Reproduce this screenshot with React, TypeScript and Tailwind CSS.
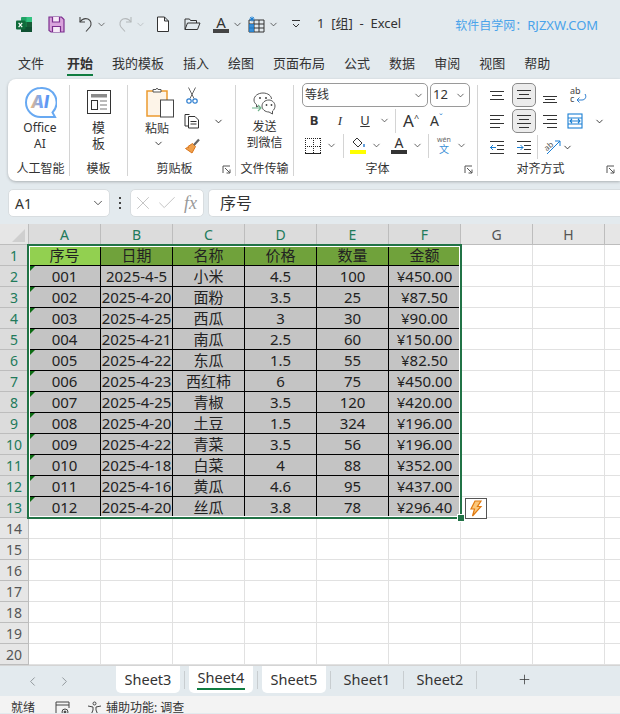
import { ReactNode } from 'react'
import { ChevronDown, ChevronLeft, ChevronRight, Plus, X, Check } from 'lucide-react'

const FONT = '[font-family:"Noto_Sans","Noto_Sans_CJK_SC",sans-serif]'

const tabs = ['文件', '开始', '我的模板', '插入', '绘图', '页面布局', '公式', '数据', '审阅', '视图', '帮助']

const headers = ['序号', '日期', '名称', '价格', '数量', '金额']
const rows = [
    ['001', '2025-4-5', '小米', '4.5', '100', '¥450.00'],
    ['002', '2025-4-20', '面粉', '3.5', '25', '¥87.50'],
    ['003', '2025-4-25', '西瓜', '3', '30', '¥90.00'],
    ['004', '2025-4-21', '南瓜', '2.5', '60', '¥150.00'],
    ['005', '2025-4-22', '东瓜', '1.5', '55', '¥82.50'],
    ['006', '2025-4-23', '西红柿', '6', '75', '¥450.00'],
    ['007', '2025-4-25', '青椒', '3.5', '120', '¥420.00'],
    ['008', '2025-4-20', '土豆', '1.5', '324', '¥196.00'],
    ['009', '2025-4-22', '青菜', '3.5', '56', '¥196.00'],
    ['010', '2025-4-18', '白菜', '4', '88', '¥352.00'],
    ['011', '2025-4-16', '黄瓜', '4.6', '95', '¥437.00'],
    ['012', '2025-4-20', '丝瓜', '3.8', '78', '¥296.40'],
]

const Chev = ({ className = 'text-[#333]' }: { className?: string }) => (
    <ChevronDown size={11} strokeWidth={1.6} className={`shrink-0 ${className}`} />
)

const Sep = () => <div className="h-[91px] w-px shrink-0 bg-[#d4d4d4]" />

const Launcher = () => (
    <svg width="10" height="10" viewBox="0 0 10 10" fill="none" stroke="#555" strokeWidth="1">
        <path d="M1 8V1h7" />
        <path d="M3 3l5 5M8 4.5V8H4.5" />
    </svg>
)

// three or more horizontal strokes used by all the alignment buttons
const Lines = ({ lines }: { lines: [number, number, number][] }) => (
    <svg width="16" height="16" viewBox="0 0 16 16" stroke="#333" strokeWidth="1">
        {lines.map(([x1, x2, y]) => (
            <path key={`${x1}-${y}`} d={`M${x1} ${y + 0.5}H${x2}`} />
        ))}
    </svg>
)

const AlignBtn = ({ on, children }: { on?: boolean; children: ReactNode }) => (
    <div
        className={`flex h-6 w-6 items-center justify-center rounded-[5px] ${
            on ? 'border border-[#8a8a8a] bg-[#ececec]' : ''
        }`}
    >
        {children}
    </div>
)

const Group = ({
    width,
    label,
    labelClass = '',
    launcher,
    children,
}: {
    width: number
    label: string
    labelClass?: string
    launcher?: boolean
    children: ReactNode
}) => (
    <div className="flex h-[92px] shrink-0 flex-col" style={{ width }}>
        <div className="min-h-0 flex-1">{children}</div>
        <div className={`relative flex h-[16px] items-center justify-center pt-[1px] text-[12px] leading-none text-[#333] ${labelClass}`}>
            {label}
            {launcher && (
                <div className="absolute right-[3px] top-[5px]">
                    <Launcher />
                </div>
            )}
        </div>
    </div>
)

const ExcelLogo = () => (
    <svg width="17" height="17" viewBox="0 0 17 17" className="shrink-0">
        <rect x="5" y="1" width="11" height="15" rx="1" fill="#21a366" />
        <rect x="10.5" y="1" width="5.5" height="5" fill="#33c481" />
        <rect x="5" y="6" width="5.5" height="5" fill="#107c41" />
        <rect x="10.5" y="6" width="5.5" height="5" fill="#185c37" />
        <rect x="5" y="11" width="11" height="5" fill="#0f5132" />
        <rect x="0" y="4.5" width="9.5" height="9" rx="1" fill="#0f6b3a" />
        <path d="M2.6 6.8l3.6 4.4M6.2 6.8l-3.6 4.4" stroke="#fff" strokeWidth="1.2" />
    </svg>
)

const TitleBar = () => (
    <div className="flex h-[47px] shrink-0 items-center whitespace-nowrap pl-[16px] pt-[1px] text-[#333]">
        <ExcelLogo />
        <svg className="ml-[15px] shrink-0" width="17" height="17" viewBox="0 0 17 17" fill="none" stroke="#7b2d8e" strokeWidth="1.2">
            <path d="M1 1h12.5L16 3.5V16H3l-2-1.5z" fill="#d9a3dc" />
            <path d="M4.5 1v5h7V1M4.5 16v-5.5h8V16" fill="#f6e9f7" />
        </svg>
        <svg className="ml-[13px] shrink-0" width="18" height="18" viewBox="0 0 18 18" fill="none" stroke="#444" strokeWidth="1.1">
            <path d="M2 2v5h5" />
            <path d="M2 7c2-3 5-4 8-3 3 1.2 4 5 2 8l-4 4.5" />
        </svg>
        <Chev className="text-[#444]" />
        <svg className="ml-[8px] shrink-0" width="18" height="18" viewBox="0 0 18 18" fill="none" stroke="#b4b8ba" strokeWidth="1.1">
            <path d="M16 2v5h-5" />
            <path d="M16 7c-2-3-5-4-8-3-3 1.2-4 5-2 8l4 4.5" />
        </svg>
        <Chev className="ml-[2px] text-[#b4b8ba]" />
        <svg className="ml-[10px] shrink-0" width="14" height="17" viewBox="0 0 14 17" fill="#fff" stroke="#333" strokeWidth="1">
            <path d="M1.5 1h7l4 4v10.500h-11zM8.500 1v4h4" />
        </svg>
        <svg className="ml-[14px] shrink-0" width="17" height="14" viewBox="0 0 17 14" fill="none" stroke="#333" strokeWidth="1">
            <path d="M1 12.500V2h4.500l1 1.500h6V6M1 12.500L3.500 6H16l-2.500 6.500z" />
        </svg>
        <div className="ml-[12px] flex h-[17px] w-[16px] shrink-0 flex-col items-center justify-between">
            <span className="text-[15px] leading-[13px]">A</span>
            <div className="h-[4px] w-full bg-[#444]" />
        </div>
        <Chev className="ml-[3px]" />
        <svg className="ml-[5px] shrink-0" width="17" height="17" viewBox="0 0 17 17" fill="none" strokeWidth="1">
            <path d="M1 4h15v12H1zM6 4v12M11 4v12M1 8h15M1 12h15" stroke="#333" />
            <rect x="1" y="8" width="5" height="8" fill="#1a7fd4" opacity=".85" />
            <path d="M4 0.500v5M1.500 3h5M2.200 1.200l3.600 3.600M5.800 1.200L2.200 4.800" stroke="#1a7fd4" />
        </svg>
        <Chev className="ml-[3px]" />
        <svg className="ml-[11px] shrink-0" width="12" height="12" viewBox="0 0 12 12" fill="none" stroke="#333" strokeWidth="1">
            <path d="M2 2.500h8M3 6l3 3 3-3" />
        </svg>
        <span className="ml-[15px] whitespace-pre text-[13px]">1  [组]  -  Excel</span>
        <span className="ml-[54px] pt-[2px] text-[13px] leading-none text-[#4aa3ea]">
            <span className="text-[12px]">软件自学网：</span>RJZXW.COM
        </span>
    </div>
)

const TabBar = () => (
    <div className="flex h-[32px] shrink-0 gap-[19px] pl-[18px] text-[13px] text-[#333]">
        {tabs.map((t) => (
            <div key={t} className={`relative flex h-[32px] items-center pt-[1px] ${t === '开始' ? 'ml-[4px]' : ''}`}>
                <span className={t === '开始' ? 'font-bold' : ''}>{t}</span>
                {t === '开始' && <div className="absolute bottom-[3px] left-0 right-0 h-[2px] bg-[#107c41]" />}
            </div>
        ))}
    </div>
)

const AiGroup = () => (
    <div className="flex flex-col items-center pl-[2px] pt-[2px]">
        <svg width="33" height="33" viewBox="0 0 33 33">
            <defs>
                <linearGradient id="ai" x1="0" y1="0" x2="1" y2="0">
                    <stop offset="0" stopColor="#f5b87a" />
                    <stop offset="0.5" stopColor="#7aa6f5" />
                    <stop offset="1" stopColor="#4f8ef0" />
                </linearGradient>
            </defs>
            <path d="M16.500 2a14.500 14.500 0 1 0 0 29h14.500l-2.500-4.500A14.500 14.500 0 0 0 16.500 2z" fill="#fff" stroke="#68a9f2" strokeWidth="2" />
            <text x="16" y="22" textAnchor="middle" fontSize="17" fontWeight="800" fontStyle="italic" fontFamily="Inter, sans-serif" fill="url(#ai)">
                AI
            </text>
        </svg>
        <div className="mt-[1px] text-center text-[12px] leading-[16px] text-[#333]">
            Office
            <br />
            AI
        </div>
    </div>
)

const TemplateGroup = () => (
    <div className="flex flex-col items-center pt-[6px]">
        <svg width="24" height="24" viewBox="0 0 24 24" fill="none" stroke="#333" strokeWidth="1">
            <rect x="0.500" y="0.500" width="23" height="23" />
            <rect x="4" y="4" width="16" height="3.500" fill="#8a8a8a" stroke="none" />
            <rect x="4.500" y="10.500" width="6" height="9" />
            <path d="M13 11h7M13 15h7M13 19h7" stroke="#777" strokeWidth="1.2" />
        </svg>
        <div className="mt-[5px] text-center text-[13px] leading-[16px] text-[#333]">
            模
            <br />
            板
        </div>
    </div>
)

const ClipGroup = () => (
    <div className="flex pl-[17px] pt-[3px]">
        <div className="flex w-[30px] flex-col items-center">
            <svg width="28" height="31" viewBox="0 0 28 31" fill="none">
                <rect x="1" y="4" width="20" height="25" fill="#fdf4e8" stroke="#ec9a2f" strokeWidth="1.5" />
                <path d="M7 5V2.500h3l1-1.500 1 1.500h3V5z" fill="#fff" stroke="#555" />
                <rect x="14.500" y="13" width="13" height="17" fill="#fff" stroke="#444" />
            </svg>
            <span className="mr-[6px] mt-[3px] whitespace-nowrap text-[12px] leading-[15px] text-[#333]">粘贴</span>
            <Chev className="mr-[4px] mt-[2px]" />
        </div>
        <div className="ml-[9px] flex flex-col items-start gap-[9px]">
            <svg className="ml-[2px]" width="12" height="17" viewBox="0 0 12 17" fill="none">
                <path d="M2.500 0.500l5.500 11M9.500 0.500l-5.500 11" stroke="#666" />
                <circle cx="3" cy="14" r="2.200" stroke="#2f7fd0" strokeWidth="1.200" />
                <circle cx="9" cy="14" r="2.200" stroke="#2f7fd0" strokeWidth="1.200" />
            </svg>
            <div className="flex items-center">
                <svg width="16" height="16" viewBox="0 0 16 16" fill="#fff" stroke="#333" strokeWidth="1">
                    <path d="M5.500 1.500H1V13h3.500" fill="none" />
                    <path d="M4.500 3.500h6.500l3.500 3.500v8h-10zM6.500 8.500h6M6.500 11h6" />
                </svg>
                <Chev className="ml-[13px]" />
            </div>
            <svg width="17" height="17" viewBox="0 0 17 17" fill="none">
                <path d="M8.500 5.500l3 3-3.500 6.500-6.500-4.500 2-1 1 .5-.5-1.500z" fill="#f0a04b" stroke="#d9741a" />
                <path d="M10 7l5-5.500" stroke="#666" strokeWidth="2.200" />
            </svg>
        </div>
    </div>
)

const WechatGroup = () => (
    <div className="flex flex-col items-center pt-[6px]">
        <svg width="27" height="27" viewBox="0 0 27 27" fill="none" stroke="#444" strokeWidth="0.9">
            <path d="M12 3c-5 0-9 3-9 7 0 2 1 3.500 2.500 4.500V17l2.500-1.500" fill="#fff" />
            <path d="M12 3c5 0 8.500 3 8.500 6" />
            <path d="M18 10c-4 0-7 2.700-7 6s3 6 7 6l3.500 2v-3c1.500-1 2.500-3 2.500-5 0-3.300-3-6-6-6z" fill="#fff" />
            <circle cx="9" cy="8" r="1" fill="#444" stroke="none" />
            <circle cx="15" cy="8" r="1" fill="#444" stroke="none" />
            <circle cx="15.500" cy="15" r="0.900" fill="#444" stroke="none" />
            <circle cx="20.500" cy="15" r="0.900" fill="#444" stroke="none" />
            <path d="M1 18h9M7 15l3 3-3 3" stroke="#6fb48b" strokeWidth="1.200" />
        </svg>
        <div className="mt-[2px] text-center text-[12px] leading-[16px] text-[#333]">
            发送
            <br />
            到微信
        </div>
    </div>
)

const SelectBox = ({ width, text, className }: { width: number; text: string; className?: string }) => (
    <div
        className={`flex h-[24px] items-center justify-between rounded-[5px] border border-[#9a9a9a] bg-white pl-[2px] pr-[3px] text-[#333] ${className ?? ''}`}
        style={{ width }}
    >
        <span>{text}</span>
        <Chev />
    </div>
)

const FontGroup = () => (
    <div className="-mt-[1px] flex flex-col pl-[8px] text-[#333]">
        <div className="flex gap-[2px]">
            <SelectBox width={126} text="等线" className="text-[12px]" />
            <SelectBox width={40} text="12" className="text-[13px]" />
        </div>
        <div className="mt-[1px] flex h-[25px] items-center">
            <span className="ml-[6px] w-[12px] text-center text-[13px] font-bold leading-none">B</span>
            <span className="ml-[14px] w-[12px] text-center text-[13px] italic leading-none [font-family:'Liberation_Serif',serif]">I</span>
            <span className="ml-[13px] w-[12px] text-center text-[13px] leading-[13px] underline">U</span>
            <Chev className="ml-[8px]" />
            <div className="ml-[5px] h-[24px] w-px bg-[#d4d4d4]" />
            <span className="ml-[7px] text-[17px] leading-none">A</span>
            <span className="mb-[6px] text-[9px] leading-none">^</span>
            <span className="ml-[11px] text-[14px] leading-none">A</span>
            <span className="mb-[6px] text-[9px] leading-none text-[#2f7fd0]">ˇ</span>
        </div>
        <div className="flex h-[25px] items-center">
            <svg className="ml-[3px] shrink-0" width="16" height="16" viewBox="0 0 16 16" fill="none" stroke="#222" strokeWidth="1">
                <path d="M0 .5h16M0 8.500h16M.5 0v16M8.500 0v16M15.500 0v16" strokeDasharray="1 1" />
                <path d="M0 15.500h16" />
            </svg>
            <Chev className="ml-[5px]" />
            <div className="ml-[6px] h-[24px] w-px shrink-0 bg-[#d4d4d4]" />
            <div className="ml-[6px] flex w-[16px] shrink-0 flex-col items-center">
                <svg width="15" height="12" viewBox="0 0 15 12" fill="none" stroke="#333">
                    <path d="M6 1l5 5-4 4-5-5z" />
                    <path d="M13 7v3" stroke="#2f7fd0" strokeWidth="1.500" />
                </svg>
                <div className="mt-[1px] h-[4px] w-full bg-[#ffff00]" />
            </div>
            <Chev className="ml-[5px]" />
            <div className="ml-[9px] flex w-[16px] shrink-0 flex-col items-center">
                <span className="text-[14px] leading-[12px]">A</span>
                <div className="mt-[1px] h-[4px] w-full bg-[#333]" />
            </div>
            <Chev className="ml-[5px]" />
            <div className="ml-[5px] h-[24px] w-px shrink-0 bg-[#d4d4d4]" />
            <div className="ml-[6px] flex w-[18px] shrink-0 flex-col items-center">
                <span className="text-[7px] leading-[8px] text-[#666]">wén</span>
                <span className="text-[10px] leading-[11px] text-[#3a8fd6]">文</span>
            </div>
            <Chev className="ml-[3px]" />
        </div>
    </div>
)

const AlignGroup = () => (
    <div className="-mt-[1px] flex flex-col pl-[8px]">
        <div className="flex h-[26px] items-start">
            <AlignBtn>
                <Lines lines={[[0, 14, 4], [2, 12, 8], [0, 14, 12]]} />
            </AlignBtn>
            <div className="ml-[2px]">
                <AlignBtn on>
                    <Lines lines={[[1, 15, 3], [3, 13, 7], [1, 15, 11]]} />
                </AlignBtn>
            </div>
            <div className="ml-[2px]">
                <AlignBtn>
                    <Lines lines={[[1, 15, 9], [3, 13, 12], [1, 15, 15]]} />
                </AlignBtn>
            </div>
            <svg className="ml-[6px] overflow-visible" width="20" height="22" viewBox="0 0 20 22" fill="none" stroke="#2f7fd0" strokeWidth="1">
                <text x="2" y="11" fontSize="9" fill="#444" stroke="none" fontFamily="Noto Sans, sans-serif">ab</text>
                <text x="2" y="19" fontSize="9" fill="#444" stroke="none" fontFamily="Noto Sans, sans-serif">c</text>
                <path d="M17 11c2 3 0 6-3 6H9M11.500 14.500L9 17l2.500 2.500" />
            </svg>
        </div>
        <div className="flex h-[26px] items-start">
            <AlignBtn>
                <Lines lines={[[0, 14, 2], [0, 10, 6], [0, 14, 10], [0, 10, 14]]} />
            </AlignBtn>
            <div className="ml-[2px]">
                <AlignBtn on>
                    <Lines lines={[[1, 15, 2], [3, 13, 6], [1, 15, 10], [3, 13, 14]]} />
                </AlignBtn>
            </div>
            <div className="ml-[2px]">
                <AlignBtn>
                    <Lines lines={[[1, 15, 2], [5, 15, 6], [1, 15, 10], [5, 15, 14]]} />
                </AlignBtn>
            </div>
            <svg className="ml-[5px] mt-[4px] shrink-0" width="16" height="16" viewBox="0 0 16 16" fill="none" stroke="#1a7fd4" strokeWidth="1.100">
                <rect x="1" y="1" width="14" height="14" />
                <path d="M1 5h14M1 11h14M3 8h10M5 6l-2 2 2 2M11 6l2 2-2 2" />
            </svg>
            <Chev className="ml-[11px] mt-[7px]" />
        </div>
        <div className="flex h-[26px] items-start">
            <AlignBtn>
                <svg width="16" height="16" viewBox="0 0 16 16" fill="none" stroke="#333">
                    <path d="M0 2.500h14M7 6.500h7M7 10.500h7M0 14.500h14" />
                    <path d="M6 8.500H0M3 6L.5 8.500 3 11" stroke="#1a7fd4" />
                </svg>
            </AlignBtn>
            <div className="ml-[2px]">
                <AlignBtn>
                    <svg width="16" height="16" viewBox="0 0 16 16" fill="none" stroke="#333">
                        <path d="M1 2.500h14M8 6.500h7M8 10.500h7M1 14.500h14" />
                        <path d="M1 8.500h6M4.500 6L7 8.500 4.500 11" stroke="#1a7fd4" />
                    </svg>
                </AlignBtn>
            </div>
            <div className="ml-[1px] h-[24px] w-px bg-[#d4d4d4]" />
            <svg className="ml-[6px] mt-[3px] overflow-visible" width="18" height="18" viewBox="0 0 18 18" fill="none" stroke="#1a7fd4">
                <text x="0" y="10" fontSize="8" fill="#555" stroke="none" transform="rotate(-40 6 8)" fontFamily="Noto Sans, sans-serif">ab</text>
                <path d="M3 16L16 3M11 3h5v5" />
            </svg>
            <Chev className="mt-[7px]" />
        </div>
    </div>
)

const Ribbon = () => (
    <div className="ml-[8px] flex h-[102px] shrink-0 items-center rounded-l-[8px] bg-white pl-[1px] shadow-[0_1px_3px_rgba(0,0,0,0.25)]">
        <Group width={60} label="人工智能" labelClass="pl-[3px]">
            <AiGroup />
        </Group>
        <Sep />
        <Group width={57} label="模板">
            <TemplateGroup />
        </Group>
        <Sep />
        <Group width={107} label="剪贴板" labelClass="pr-[14px]" launcher>
            <ClipGroup />
        </Group>
        <Sep />
        <Group width={57} label="文件传输">
            <WechatGroup />
        </Group>
        <Sep />
        <Group width={183} label="字体" labelClass="pr-[16px]" launcher>
            <FontGroup />
        </Group>
        <Sep />
        <Group width={141} label="对齐方式" labelClass="pr-[16px]" launcher>
            <AlignGroup />
        </Group>
    </div>
)

const FormulaBar = () => (
    <div className="mt-[8px] flex h-[28px] shrink-0 items-center pl-[8px] text-[#333]">
        <div className="flex h-[28px] w-[102px] items-center justify-between rounded-[5px] border border-[#d8dde0] bg-white pl-[6px] pr-[4px] text-[14px]">
            A1
            <ChevronDown size={14} strokeWidth={1.4} />
        </div>
        <div className="ml-[9px] flex h-[12px] w-[3px] flex-col justify-between">
            <div className="h-[2px] w-[2px] bg-[#444]" />
            <div className="h-[2px] w-[2px] bg-[#444]" />
            <div className="h-[2px] w-[2px] bg-[#444]" />
        </div>
        <div className="ml-[8px] flex h-[28px] w-[74px] items-center rounded-[5px] border border-[#d8dde0] bg-white pl-[1px] text-[#b9b9b9]">
            <X size={22} strokeWidth={0.9} />
            <Check size={22} strokeWidth={0.9} className="ml-[2px]" />
            <span className="ml-[6px] text-[18px] italic leading-none text-[#999] [font-family:'Liberation_Serif',serif]">fx</span>
        </div>
        <div className="ml-[4px] flex h-[28px] min-w-0 flex-1 items-center rounded-l-[5px] border border-r-0 border-[#d8dde0] bg-white pl-[11px] text-[16px]">
            序号
        </div>
    </div>
)

const colLetters = ['A', 'B', 'C', 'D', 'E', 'F', 'G', 'H']
const cellClass = 'flex items-center justify-center border-r border-b'

const Sheet = () => (
    <div className="relative mt-[7px] shrink-0">
        <div className="grid grid-cols-[29px_repeat(8,72px)_15px] auto-rows-[21px] bg-white">
            <div className="relative border-r border-b border-[#bdbdbd] bg-[#e6e6e6]">
                <div className="absolute bottom-[2px] right-[3px] h-0 w-0 border-b-[13px] border-l-[13px] border-b-[#cfcfcf] border-l-transparent" />
            </div>
            {colLetters.map((c, i) => (
                <div
                    key={c}
                    className={`${cellClass} border-[#bdbdbd] text-[14px] ${
                        i < 6 ? 'bg-[#dcdcdc] text-[#217a5a]' : 'bg-[#e6e6e6] text-[#555]'
                    }`}
                >
                    {c}
                </div>
            ))}
            <div className="border-b border-[#bdbdbd] bg-[#e6e6e6]" />
            {Array.from({ length: 20 }, (_, r) => (
                <Row key={r} r={r} />
            ))}
        </div>
        {/* selection frame and quick analysis sit over the cells */}
        <div className="pointer-events-none absolute left-[27px] top-[20px] h-[275px] w-[435px] border-2 border-[#217346] outline outline-1 -outline-offset-3 outline-white" />
        <div className="absolute left-[458px] top-[291px] h-[6px] w-[6px] bg-[#217346] outline outline-1 outline-white" />
        <div className="absolute left-[465px] top-[274px] flex h-[21px] w-[22px] items-center justify-center border border-[#555] bg-white">
            <svg width="14" height="17" viewBox="0 0 14 17" fill="#fbc77a" stroke="#e07a10" strokeWidth="1.200">
                <path d="M6 1h6L8.500 6.500H12L3.500 16l2-7H2z" />
            </svg>
        </div>
    </div>
)

const Row = ({ r }: { r: number }) => {
    const inData = r < 13
    const isHeader = r === 0
    const data = isHeader ? headers : rows[r - 1]
    return (
        <>
            <div
                className={`${cellClass} border-[#bdbdbd] text-[14px] ${
                    inData ? 'bg-[#dcdcdc] text-[#217a5a]' : 'bg-[#e6e6e6] text-[#555]'
                }`}
            >
                {r + 1}
            </div>
            {colLetters.map((c, i) => {
                if (inData && i < 6) {
                    const bg = isHeader ? (i === 0 ? 'bg-[#92d050]' : 'bg-[#70a23b]') : 'bg-[#c4c4c4]'
                    return (
                        <div
                            key={c}
                            className={`relative whitespace-nowrap border-black pt-[1px] text-[15px] leading-none text-[#222] ${cellClass} ${bg}`}
                        >
                            {data[i]}
                            {!isHeader && i === 0 && (
                                <div className="absolute left-0 top-0 h-0 w-0 border-t-[6px] border-r-[6px] border-t-[#0b6b12] border-r-transparent" />
                            )}
                        </div>
                    )
                }
                return <div key={c} className="border-r border-b border-[#e1e1e1]" />
            })}
            <div className="border-b border-[#e1e1e1]" />
        </>
    )
}

const SheetTabs = () => (
    <div className="flex h-[31px] shrink-0 border-t border-[#d4d4d4] bg-[#e3eaee] text-[14.5px] text-[#333]">
        <div className="flex w-[116px] items-center pl-[25px] text-[#7f868a]">
            <ChevronLeft size={15} strokeWidth={1.3} />
            <ChevronRight size={15} strokeWidth={1.3} className="ml-[17px]" />
        </div>
        <div className="flex h-[27px] w-[64px] items-center justify-center rounded-b-[5px] bg-white">Sheet3</div>
        <div className="mx-[4px] mt-[5px] h-[18px] w-px bg-[#c8cdd0]" />
        <div className="relative flex h-[27px] w-[64px] items-center justify-center rounded-b-[5px] bg-white pb-[3px]">
            Sheet4
            <div className="absolute bottom-[3px] left-[8px] right-[8px] h-[2px] bg-[#107c41]" />
        </div>
        <div className="mx-[4px] mt-[5px] h-[18px] w-px bg-[#c8cdd0]" />
        <div className="flex h-[27px] w-[64px] items-center justify-center rounded-b-[5px] bg-white">Sheet5</div>
        <div className="ml-[4px] mt-[5px] h-[18px] w-px bg-[#c8cdd0]" />
        <div className="flex h-[27px] w-[72px] items-center justify-center">Sheet1</div>
        <div className="mt-[5px] h-[18px] w-px bg-[#c8cdd0]" />
        <div className="flex h-[27px] w-[72px] items-center justify-center">Sheet2</div>
        <div className="mt-[5px] h-[18px] w-px bg-[#c8cdd0]" />
        <Plus size={15} strokeWidth={1.2} className="ml-[40px] mt-[6px]" />
    </div>
)

const StatusBar = () => (
    <div className="flex h-[17px] shrink-0 items-start overflow-hidden bg-[#f3f3f3] pl-[11px] pt-[5px] text-[12px] leading-[14px] text-[#333]">
        <span>就绪</span>
        <svg className="ml-[20px] shrink-0" width="15" height="15" viewBox="0 0 15 15" fill="none" stroke="#444">
            <path d="M1 13V1h13v6M1 4h13" />
            <circle cx="10" cy="11" r="3" />
            <circle cx="10" cy="11" r="1" fill="#444" />
        </svg>
        <svg className="ml-[17px] shrink-0" width="15" height="15" viewBox="0 0 15 15" fill="none" stroke="#444">
            <circle cx="7.500" cy="2.500" r="1.500" />
            <path d="M1 5l5 1v3l-2 5M14 5l-5 1v3l2 5" />
        </svg>
        <span className="ml-[4px] whitespace-nowrap">辅助功能: 调查</span>
    </div>
)

export default function App() {
    return (
        <div className={`flex h-[714px] w-[620px] flex-col overflow-hidden bg-[#e3eaee] ${FONT}`}>
            <TitleBar />
            <TabBar />
            <Ribbon />
            <FormulaBar />
            <Sheet />
            <SheetTabs />
            <StatusBar />
        </div>
    )
}
